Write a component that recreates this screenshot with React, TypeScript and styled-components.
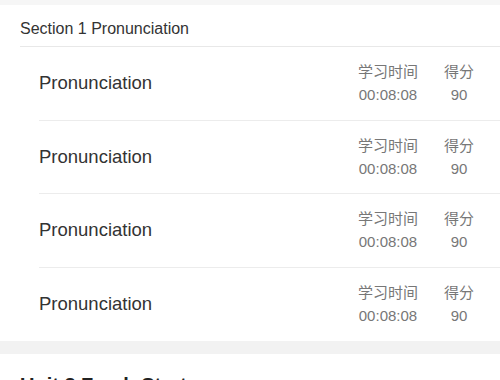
import React from "react";
import styled, { createGlobalStyle } from "styled-components";

interface Lesson {
  title: string;
  time: string;
  score: number;
}

const lessons: Lesson[] = [
  { title: "Pronunciation", time: "00:08:08", score: 90 },
  { title: "Pronunciation", time: "00:08:08", score: 90 },
  { title: "Pronunciation", time: "00:08:08", score: 90 },
  { title: "Pronunciation", time: "00:08:08", score: 90 },
];

const GlobalStyle = createGlobalStyle`
  html, body {
    margin: 0;
    padding: 0;
    background: #ffffff;
    overflow: hidden;
  }
  body {
    font-family: "Liberation Sans", Arial, "Noto Sans CJK SC", sans-serif;
  }
`;

const App = () => {
  return (
    <Page>
      <GlobalStyle />
      <TopGap />
      <SectionHeader>
        <SectionTitle>Section 1 Pronunciation</SectionTitle>
      </SectionHeader>
      <LessonList>
        {lessons.map((l, i) => (
          <LessonRow key={i} last={i === lessons.length - 1}>
            <LessonTitle>{l.title}</LessonTitle>
            <Stats>
              <Stat wide>
                <span>学习时间</span>
                <span>{l.time}</span>
              </Stat>
              <Stat>
                <span>得分</span>
                <span>{l.score}</span>
              </Stat>
            </Stats>
          </LessonRow>
        ))}
      </LessonList>
      <Band />
      <UnitHeader>Unit 2 Fresh Start</UnitHeader>
    </Page>
  );
};

const Page = styled.div`
  width: 500px;
  height: 380px;
  overflow: hidden;
  background: #fff;
`;

const TopGap = styled.div`
  height: 5px;
  background: #f6f6f6;
`;

const SectionHeader = styled.div`
  margin-left: 20px;
  height: 42px;
  box-sizing: border-box;
  border-bottom: 1px solid #e8e8e8;
  display: flex;
  align-items: center;
`;

const SectionTitle = styled.div`
  font-size: 16px;
  color: #333;
  padding-top: 6px;
`;

const LessonList = styled.div`
  padding-left: 39px;
`;

const LessonRow = styled.div<{ last?: boolean }>`
  height: 73.5px;
  box-sizing: border-box;
  border-bottom: ${(p) => (p.last ? "none" : "1px solid #ececec")};
  display: flex;
  align-items: center;
  justify-content: space-between;
  padding-right: 26px;
`;

const LessonTitle = styled.div`
  font-size: 18.5px;
  color: #333;
`;

const Stats = styled.div`
  display: flex;
  gap: 26px;
  padding-top: 1px;
`;

const Stat = styled.div<{ wide?: boolean }>`
  display: flex;
  flex-direction: column;
  align-items: center;
  gap: 5px;
  min-width: ${(p) => (p.wide ? "60px" : "30px")};
  font-size: 15px;
  color: #777;
  line-height: 18px;
`;

const Band = styled.div`
  height: 13px;
  background: #f2f2f2;
`;

const UnitHeader = styled.div`
  padding: 20px 20px 0;
  font-size: 20px;
  font-weight: bold;
  color: #222;
`;

export default App;
